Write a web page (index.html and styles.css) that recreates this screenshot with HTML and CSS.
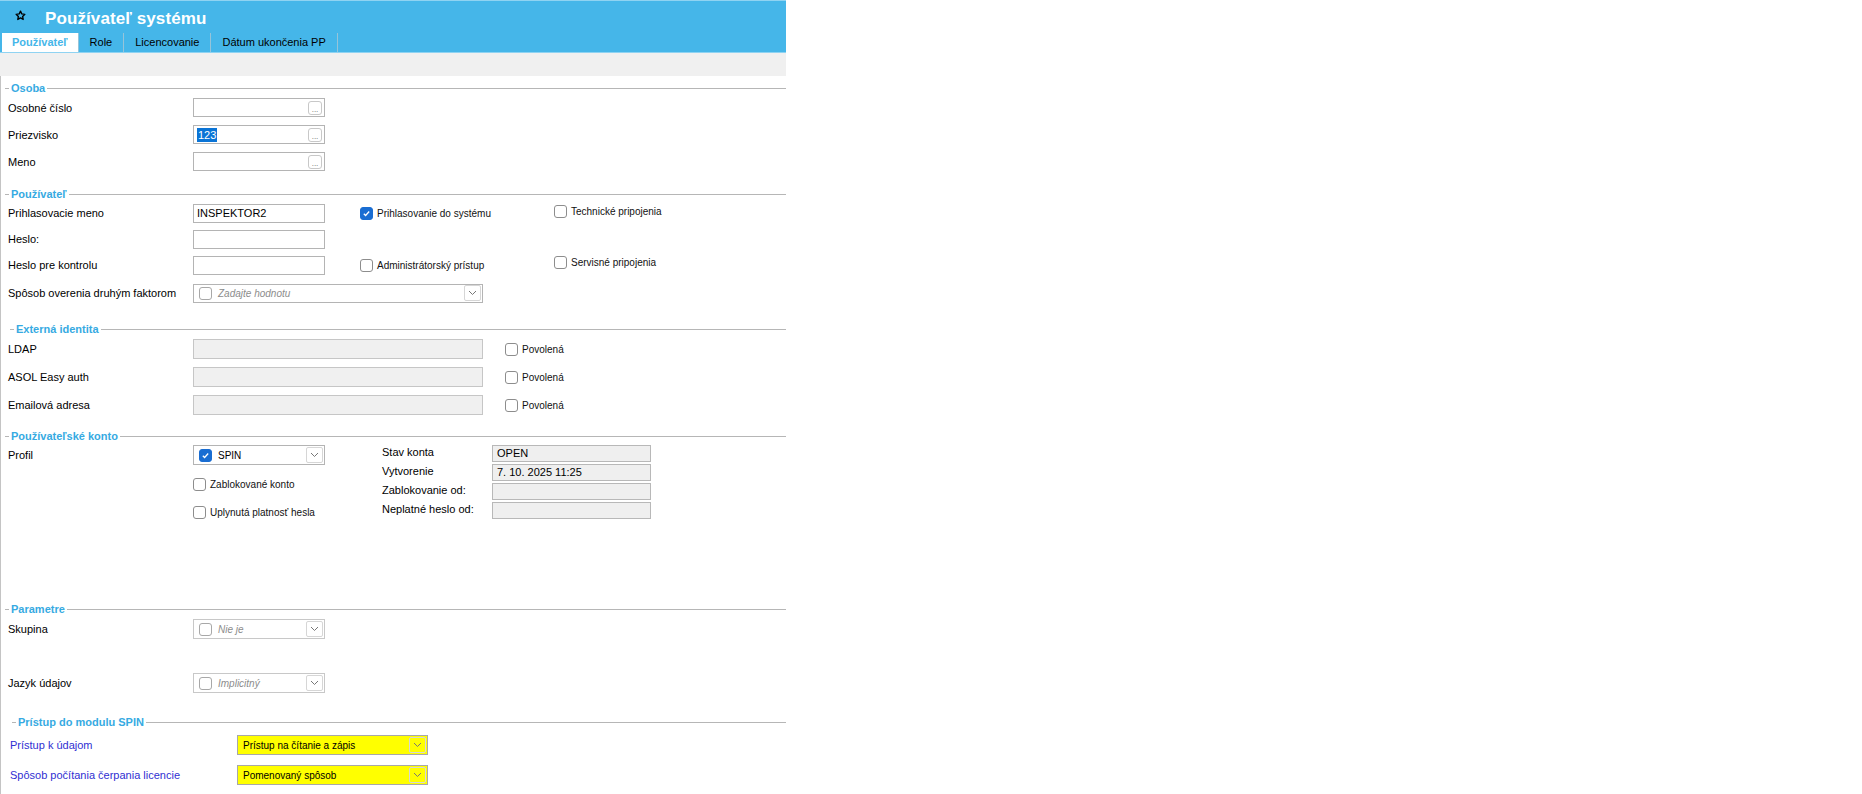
FILE: index.html
```html
<!doctype html>
<html lang="sk">
<head>
  <meta charset="UTF-8" />
  <title>Používateľ systému</title>
  <link rel="stylesheet" href="styles.css">
</head>
<body>
  <div class="app">
    <header class="titlebar">
      <div class="title-row">
        <svg class="star" width="11" height="11" viewBox="0 0 24 24"><path d="M12 2.5l2.9 6.1 6.6.8-4.9 4.6 1.3 6.6L12 17.3l-5.9 3.3 1.3-6.6-4.9-4.6 6.6-.8z" fill="none" stroke="#000" stroke-width="3" stroke-linejoin="round"/></svg>
        <h1>Používateľ systému</h1>
      </div>
      <nav class="tabs">
        <a class="tab active">Používateľ</a>
        <a class="tab">Role</a>
        <a class="tab">Licencovanie</a>
        <a class="tab">Dátum ukončenia PP</a>
      </nav>
    </header>
    <div class="toolbar"></div>

    <main class="form">
      <!-- Osoba -->
      <section class="group">
        <div class="group-head"><span>Osoba</span></div>
        <div class="row">
          <label class="lbl">Osobné číslo</label>
          <div class="field"><span class="dots">...</span></div>
        </div>
        <div class="row">
          <label class="lbl">Priezvisko</label>
          <div class="field"><span class="sel">123</span><span class="dots">...</span></div>
        </div>
        <div class="row">
          <label class="lbl">Meno</label>
          <div class="field"><span class="dots">...</span></div>
        </div>
      </section>

      <!-- Používateľ -->
      <section class="group g-user">
        <div class="group-head"><span>Používateľ</span></div>
        <div class="row short">
          <label class="lbl">Prihlasovacie meno</label>
          <div class="field">INSPEKTOR2</div>
          <div class="check col2"><span class="box on"><svg width="9" height="9" viewBox="0 0 10 10"><path d="M2 5.2l2 2 4-4.4" fill="none" stroke="#fff" stroke-width="1.4"/></svg></span>Prihlasovanie do systému</div>
          <div class="check col3 up-small"><span class="box"></span>Technické pripojenia</div>
        </div>
        <div class="row short">
          <label class="lbl">Heslo:</label>
          <div class="field"></div>
        </div>
        <div class="row short">
          <label class="lbl">Heslo pre kontrolu</label>
          <div class="field"></div>
          <div class="check col2"><span class="box"></span>Administrátorský prístup</div>
          <div class="check col3 up"><span class="box"></span>Servisné pripojenia</div>
        </div>
        <div class="row tall">
          <label class="lbl">Spôsob overenia druhým faktorom</label>
          <div class="combo wide">
            <span class="box"></span>
            <span class="hint">Zadajte hodnotu</span>
            <span class="arrow"><svg width="9" height="6" viewBox="0 0 9 6"><path d="M1 1l3.5 3.5L8 1" fill="none" stroke="#777" stroke-width="1"/></svg></span>
          </div>
        </div>
      </section>

      <!-- Externá identita -->
      <section class="group g-ext">
        <div class="group-head shift"><span>Externá identita</span></div>
        <div class="row ext">
          <label class="lbl">LDAP</label>
          <div class="field wide off"></div>
          <div class="check allow"><span class="box"></span>Povolená</div>
        </div>
        <div class="row ext">
          <label class="lbl">ASOL Easy auth</label>
          <div class="field wide off"></div>
          <div class="check allow"><span class="box"></span>Povolená</div>
        </div>
        <div class="row ext">
          <label class="lbl">Emailová adresa</label>
          <div class="field wide off"></div>
          <div class="check allow"><span class="box"></span>Povolená</div>
        </div>
      </section>

      <!-- Používateľské konto -->
      <section class="group g-account">
        <div class="group-head"><span>Používateľské konto</span></div>
        <div class="account">
          <label class="lbl profile">Profil</label>
          <div class="account-mid">
            <div class="combo">
              <span class="box on"><svg width="9" height="9" viewBox="0 0 10 10"><path d="M2 5.2l2 2 4-4.4" fill="none" stroke="#fff" stroke-width="1.4"/></svg></span>
              <span class="val">SPIN</span>
              <span class="arrow"><svg width="9" height="6" viewBox="0 0 9 6"><path d="M1 1l3.5 3.5L8 1" fill="none" stroke="#777" stroke-width="1"/></svg></span>
            </div>
            <div class="check blocked"><span class="box"></span>Zablokované konto</div>
            <div class="check expired"><span class="box"></span>Uplynutá platnosť hesla</div>
          </div>
          <div class="account-info">
            <span class="info-lbl">Stav konta</span>
            <div class="info-val">OPEN</div>
            <span class="info-lbl">Vytvorenie</span>
            <div class="info-val">7. 10. 2025 11:25</div>
            <span class="info-lbl">Zablokovanie od:</span>
            <div class="info-val"></div>
            <span class="info-lbl">Neplatné heslo od:</span>
            <div class="info-val"></div>
          </div>
        </div>
      </section>

      <!-- Parametre -->
      <section class="group">
        <div class="group-head"><span>Parametre</span></div>
        <div class="row param first">
          <label class="lbl">Skupina</label>
          <div class="combo dim">
            <span class="box"></span>
            <span class="hint">Nie je</span>
            <span class="arrow"><svg width="9" height="6" viewBox="0 0 9 6"><path d="M1 1l3.5 3.5L8 1" fill="none" stroke="#777" stroke-width="1"/></svg></span>
          </div>
        </div>
        <div class="row param second">
          <label class="lbl">Jazyk údajov</label>
          <div class="combo dim">
            <span class="box"></span>
            <span class="hint">Implicitný</span>
            <span class="arrow"><svg width="9" height="6" viewBox="0 0 9 6"><path d="M1 1l3.5 3.5L8 1" fill="none" stroke="#777" stroke-width="1"/></svg></span>
          </div>
        </div>
      </section>

      <!-- Prístup do modulu SPIN -->
      <section class="group g-spin">
        <div class="group-head shift-more"><span>Prístup do modulu SPIN</span></div>
        <div class="row spin first">
          <label class="lbl spin-lbl">Prístup k údajom</label>
          <div class="yellow">
            <span class="val">Prístup na čítanie a zápis</span>
            <span class="arrow"><svg width="9" height="6" viewBox="0 0 9 6"><path d="M1 1l3.5 3.5L8 1" fill="none" stroke="#777" stroke-width="1"/></svg></span>
          </div>
        </div>
        <div class="row spin second">
          <label class="lbl spin-lbl">Spôsob počítania čerpania licencie</label>
          <div class="yellow">
            <span class="val">Pomenovaný spôsob</span>
            <span class="arrow"><svg width="9" height="6" viewBox="0 0 9 6"><path d="M1 1l3.5 3.5L8 1" fill="none" stroke="#777" stroke-width="1"/></svg></span>
          </div>
        </div>
      </section>
    </main>
  </div>
</body>
</html>
```

FILE: styles.css
```css
:root {
  --blue: #45b6e9;
  --head-color: #36aae2;
  --line-color: #b6b6b6;
  --field-border: #b4b4b4;
}

body {
  margin: 0;
  padding: 0;
  background: #fff;
  color: #000;
  font-family: "Liberation Sans", Arial, sans-serif;
  font-size: 11px;
}

.app {
  width: 786px;
}

/* title bar + tabs */
.titlebar {
  background: var(--blue);
  border-top: 1px solid #8fd3f2;
  border-bottom: 1px solid #8fd3f2;
}

.title-row {
  display: flex;
  align-items: center;
  height: 32px;
  padding-left: 15px;
}

.star {
  margin-top: -4px;
}

.title-row h1 {
  margin: 4px 0 0 19px;
  font-size: 17px;
  font-weight: bold;
  color: #fff;
  letter-spacing: 0.1px;
}

.tabs {
  display: flex;
  height: 19px;
  padding-left: 2px;
}

.tab {
  padding: 0 11px;
  line-height: 19px;
  color: #000;
  border-right: 1px solid #96c4d9;
  cursor: pointer;
}

.tab.active {
  background: #fff;
  color: var(--blue);
  font-weight: bold;
  padding: 0 10px;
}

.toolbar {
  height: 23px;
  background: #f0f0f0;
}

/* form */
.form {
  border-left: 1px solid #c4c4c4;
  padding-top: 6px;
  padding-bottom: 12px;
}

.group-head {
  display: flex;
  align-items: center;
  height: 12px;
  padding-left: 4px;
}

.group-head::before {
  content: "";
  width: 4px;
  border-top: 1px solid var(--line-color);
}

.group-head::after {
  content: "";
  flex: 1;
  border-top: 1px solid var(--line-color);
}

.group-head span {
  padding: 0 2px;
  color: var(--head-color);
  font-weight: bold;
  font-size: 11px;
}

.group-head.shift {
  padding-left: 9px;
}

.group-head.shift-more {
  padding-left: 11px;
}

.g-user {
  margin-top: 13px;
}

.g-ext {
  margin-top: 15px;
}

.g-account {
  margin-top: 11px;
}

.g-spin {
  margin-top: 23px;
}

.row {
  display: flex;
  align-items: center;
  height: 27px;
}

.row.short {
  height: 26px;
}

.row.tall {
  height: 30px;
}

.row.ext {
  height: 28px;
}

.lbl {
  width: 192px;
  padding-left: 7px;
  box-sizing: border-box;
  flex-shrink: 0;
}

.field {
  display: flex;
  align-items: center;
  width: 132px;
  height: 19px;
  padding-left: 3px;
  border: 1px solid var(--field-border);
  box-sizing: border-box;
  background: #fff;
}

.field.wide {
  width: 290px;
  height: 20px;
}

.field.off {
  background: #f0f0f0;
  border-color: #c6c6c6;
}

.sel {
  background: #0a74d6;
  color: #fff;
  padding: 0 1px;
  line-height: 14px;
}

.dots {
  display: flex;
  align-items: flex-end;
  justify-content: center;
  margin-left: auto;
  margin-right: 2px;
  width: 14px;
  height: 14px;
  border: 1px solid #c8c8c8;
  border-radius: 3px;
  box-sizing: border-box;
  font-size: 8px;
  line-height: 9px;
  color: #666;
}

/* checkboxes */
.check {
  display: flex;
  align-items: center;
  gap: 4px;
  font-size: 10px;
  color: #111;
}

.box {
  display: inline-flex;
  align-items: center;
  justify-content: center;
  width: 13px;
  height: 13px;
  border: 1px solid #8d8d8d;
  border-radius: 3px;
  box-sizing: border-box;
  background: #fff;
  flex-shrink: 0;
}

.box.on {
  background: #196dd2;
  border-color: #196dd2;
}

.col2 {
  margin-left: 35px;
  width: 194px;
}

.col3.up-small {
  margin-bottom: 4px;
}

.col3.up {
  margin-bottom: 6px;
}

.allow {
  margin-left: 22px;
}

/* combos */
.combo {
  display: flex;
  align-items: center;
  width: 132px;
  height: 20px;
  padding-left: 5px;
  border: 1px solid var(--field-border);
  box-sizing: border-box;
  background: #fff;
  font-size: 10px;
}

.combo.wide {
  width: 290px;
  height: 19px;
}

.combo.dim {
  border-color: #c8c8c8;
}

.combo.dim .box,
.combo.wide .box {
  border-color: #a8a8a8;
}

.combo .box {
  margin-right: 6px;
}

.hint {
  font-style: italic;
  color: #8c8c8c;
}

.arrow {
  display: flex;
  align-items: center;
  justify-content: center;
  margin-left: auto;
  margin-right: 1px;
  width: 17px;
  height: 16px;
  border: 1px solid #d6d6d6;
  border-radius: 2px;
  box-sizing: border-box;
}

/* user account block */
.account {
  display: flex;
  height: 158px;
  padding-top: 3px;
}

.profile {
  line-height: 20px;
  align-self: flex-start;
}

.account-mid {
  display: flex;
  flex-direction: column;
  width: 189px;
}

.blocked {
  margin-top: 13px;
}

.expired {
  margin-top: 15px;
}

.account-info {
  display: grid;
  grid-template-columns: 110px 159px;
  grid-auto-rows: 17px;
  row-gap: 2px;
  align-content: start;
}

.info-lbl {
  line-height: 14px;
}

.info-val {
  padding-left: 4px;
  line-height: 15px;
  border: 1px solid #b8b8b8;
  background: #efefef;
}

/* parameters */
.row.param {
  height: 20px;
}

.row.param.first {
  margin-top: 4px;
}

.row.param.second {
  margin-top: 34px;
}

/* SPIN access */
.row.spin {
  height: 20px;
}

.row.spin.first {
  margin-top: 7px;
}

.row.spin.second {
  margin-top: 10px;
}

.spin-lbl {
  width: 236px;
  padding-left: 9px;
  color: #2f2fd2;
}

.yellow {
  display: flex;
  align-items: center;
  width: 191px;
  height: 20px;
  padding-left: 5px;
  border: 1px solid #a8a8a8;
  box-sizing: border-box;
  background: #ffff00;
  font-size: 10px;
}
```
